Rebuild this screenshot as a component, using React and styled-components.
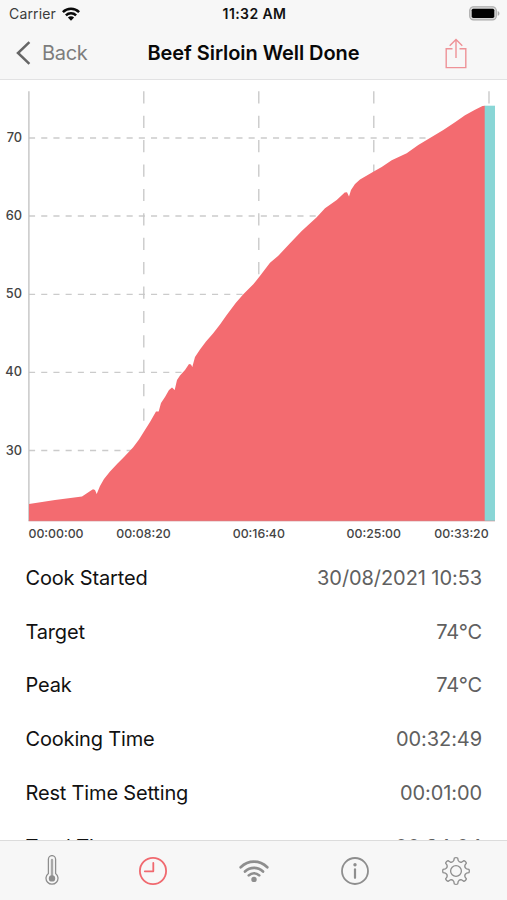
import React from "react";
import styled, { createGlobalStyle } from "styled-components";

const GlobalStyle = createGlobalStyle`
	* {
		box-sizing: border-box;
	}
	body {
		margin: 0;
		background-color: white;
		font-family: Inter, "Liberation Sans", sans-serif;
	}
`;

const Screen = styled.div`
	width: 507px;
	height: 900px;
	display: flex;
	flex-direction: column;
	overflow: hidden;
	background-color: white;
`;

const Header = styled.header`
	height: 80px;
	flex-shrink: 0;
	background-color: #f7f7f7;
	border-bottom: 1px solid #e2e2e3;
`;

const StatusBar = styled.div`
	height: 27px;
	display: grid;
	grid-template-columns: 1fr auto 1fr;
	align-items: center;
	padding: 0 7px 0 9px;
	color: #111;
`;

const Carrier = styled.div`
	display: flex;
	align-items: center;
	gap: 6px;
	font-size: 14px;
	letter-spacing: 0.15px;
	color: #3c3c3c;
`;

const Clock = styled.div`
	font-size: 14px;
	font-weight: 600;
	letter-spacing: 0.4px;
`;

const Battery = styled.div`
	display: flex;
	justify-content: flex-end;
`;

const NavBar = styled.nav`
	height: 52px;
	display: grid;
	grid-template-columns: 1fr auto 1fr;
	align-items: center;
	padding: 0 16px;
`;

const BackButton = styled.button`
	display: flex;
	align-items: center;
	gap: 11px;
	padding: 0;
	border: none;
	background: none;
	font-family: inherit;
	font-size: 20px;
	letter-spacing: -0.3px;
	color: #7d7d7d;
	cursor: pointer;
`;

const Title = styled.h1`
	margin: 0;
	font-size: 20px;
	font-weight: 600;
	letter-spacing: -0.06px;
	color: #080808;
	white-space: nowrap;
`;

const ShareButton = styled.button`
	display: flex;
	justify-self: end;
	margin-right: 24px;
	padding: 0;
	border: none;
	background: none;
	cursor: pointer;
`;

const Content = styled.main`
	flex: 1;
	min-height: 0;
	overflow: hidden;
`;

const ChartSvg = styled.svg`
	display: block;
	width: 507px;
	height: 471px;
`;

const AxisLabel = styled.text`
	font-size: ${(props) => (props.$small ? "12.3px" : "12.8px")};
	font-weight: 500;
	fill: #444;
`;

const Row = styled.div`
	height: 53.8px;
	display: flex;
	align-items: center;
	justify-content: space-between;
	padding: 0 25px 0 25.5px;
	font-size: 20px;
`;

const Label = styled.span`
	color: #111;
	letter-spacing: -0.17px;
`;

const Value = styled.span`
	color: #606060;
	letter-spacing: -0.08px;
`;

const TabBar = styled.footer`
	height: 60px;
	flex-shrink: 0;
	display: grid;
	grid-template-columns: repeat(5, 1fr);
	padding-left: 1px;
	background-color: #f7f7f7;
	border-top: 1px solid #dcdcdc;
`;

const Tab = styled.button`
	display: flex;
	align-items: center;
	justify-content: center;
	padding: 0;
	border: none;
	background: none;
	color: ${(props) => (props.$active ? "#f0696f" : "#8e8e8e")};
	cursor: pointer;
`;

// x, y along the top edge of the temperature area
const curve = [
	[29, 504], [55, 500], [82, 496.5], [91, 490.5], [93, 489.2], [95, 490], [96.7, 494],
	[100, 486], [104, 479], [110, 471.5], [118, 463], [124, 457], [133, 447.5],
	[139, 439.5], [144, 431.5], [150, 422], [154, 415], [156, 411.5], [158.7, 411.5],
	[161, 403], [165, 397], [169, 390], [172, 387.5], [174.7, 390], [177, 380],
	[180, 375.5], [185, 370], [189, 364], [191, 364.5], [192.3, 367], [195, 357],
	[200, 349.5], [206, 341.5], [213, 333.5], [220, 324.5], [226.7, 315], [235.7, 303],
	[243.3, 294.3], [253.3, 284.3], [260.7, 275], [270, 262.7], [278.3, 255.7],
	[290, 243.3], [301.7, 231], [316.7, 217.3], [325, 208.3], [336.7, 200],
	[344.7, 192.5], [347, 192.3], [349, 196.5], [351, 190], [355, 184], [360, 179.5],
	[373.3, 171.7], [381.7, 167], [391.7, 160.3], [406.7, 153.3], [418.3, 145],
	[428.3, 139], [443.3, 130], [455, 122.3], [465, 115.3], [475, 109.7],
	[482.5, 106], [485, 105.7],
];

const temps = [
	{ label: "70", y: 138 },
	{ label: "60", y: 216 },
	{ label: "50", y: 294.3 },
	{ label: "40", y: 372.3 },
	{ label: "30", y: 450.5 },
];

const times = [
	{ label: "00:00:00", x: 28.9, textX: 56 },
	{ label: "00:08:20", x: 143.8, textX: 143.5 },
	{ label: "00:16:40", x: 258.8, textX: 258.8 },
	{ label: "00:25:00", x: 373.8, textX: 373.8 },
	{ label: "00:33:20", x: 489, textX: 461.5 },
];

const details = [
	{ label: "Cook Started", value: "30/08/2021 10:53" },
	{ label: "Target", value: "74°C" },
	{ label: "Peak", value: "74°C" },
	{ label: "Cooking Time", value: "00:32:49" },
	{ label: "Rest Time Setting", value: "00:01:00" },
	{ label: "Total Time", value: "00:34:04" },
];

function Chart() {
	const area = `29,521 ${curve.map((p) => p.join(",")).join(" ")} 485,521`;
	return (
		<ChartSvg viewBox="0 80 507 471">
			{temps.map((t) => (
				<g key={t.label}>
					<path d={`M29 ${t.y}H495`} stroke="#cbcbcb" strokeWidth="1.3" strokeDasharray="6.1 6.1" />
					<AxisLabel x="22" y={t.y + 4} textAnchor="end">{t.label}</AxisLabel>
				</g>
			))}
			{times.map((t, i) => (
				<g key={t.label}>
					{i > 0 && (
						<path d={`M${t.x} 91.3V521`} stroke="#c6c6c6" strokeWidth="1.3" strokeDasharray="12.2 12.2" />
					)}
					<AxisLabel $small x={t.textX} y="538" textAnchor="middle">{t.label}</AxisLabel>
				</g>
			))}
			<path d="M28.9 91.3V521" stroke="#bfbfbf" strokeWidth="1.3" />
			<polygon points={area} fill="#f36b70" />
			<rect x="484.7" y="105.7" width="10.3" height="415.3" fill="#89d6d6" />
			<path d="M28.5 521H495" stroke="#c98a8f" strokeWidth="0.6" />
		</ChartSvg>
	);
}

function WifiStatusIcon() {
	return (
		<svg width="18" height="14" viewBox="0 0 18 14" fill="none" stroke="#0a0a0a" strokeWidth="2.5">
			<path d="M0.9 5.1a11.5 11.5 0 0 1 16.2 0" />
			<path d="M3.9 8.4a7.2 7.2 0 0 1 10.2 0" />
			<path d="M9 13.8L5.9 10.6a4.4 4.4 0 0 1 6.2 0z" fill="#0a0a0a" stroke="none" />
		</svg>
	);
}

function BatteryIcon() {
	return (
		<svg width="31" height="15" viewBox="0 0 31 15">
			<rect x="0.7" y="0.7" width="26.6" height="13.2" rx="3.8" fill="#d5d5d5" stroke="#aaa" strokeWidth="1.1" />
			<rect x="2.7" y="2.7" width="22.6" height="9.2" rx="1.6" fill="#000" />
			<path d="M28.7 4.9c2.3.8 2.3 4.1 0 4.9z" fill="#aaa" />
		</svg>
	);
}

function ThermometerIcon() {
	return (
		<svg width="14" height="31" viewBox="0 0 14 31" fill="none" stroke="currentColor" strokeWidth="1.3">
			<path d="M3.4 18.4V4.2a3.6 3.6 0 0 1 7.2 0V18.4a6 6 0 1 1-7.2 0z" />
			<path d="M7 5V22" strokeWidth="2.4" strokeLinecap="round" opacity="0.75" />
			<circle cx="7" cy="23.4" r="3.2" fill="currentColor" stroke="none" />
		</svg>
	);
}

function ClockIcon() {
	return (
		<svg width="30" height="30" viewBox="0 0 30 30" fill="none" stroke="currentColor" strokeWidth="1.8" strokeLinecap="round">
			<circle cx="15" cy="15" r="13.1" />
			<path d="M15.3 7v8.3H6.8" strokeLinejoin="round" />
		</svg>
	);
}

function WifiIcon() {
	return (
		<svg width="30" height="24" viewBox="0 0 30 24" fill="none" stroke="currentColor" strokeWidth="2.7" strokeLinecap="round">
			<path d="M1.7 8.2C9.5 0.8 20.5 0.8 28.3 8.2" />
			<path d="M6 12.5c5.2-4.9 12.8-4.9 18 0" />
			<path d="M9.8 16.4c3-2.9 7.4-2.9 10.4 0" />
			<circle cx="15" cy="20.4" r="2.7" fill="currentColor" stroke="none" />
		</svg>
	);
}

function InfoIcon() {
	return (
		<svg width="30" height="30" viewBox="0 0 30 30" fill="none" stroke="currentColor" strokeLinecap="round">
			<circle cx="15" cy="15" r="13" strokeWidth="1.8" />
			<circle cx="15" cy="8.8" r="1.7" fill="currentColor" stroke="none" />
			<path d="M15 13.4v8.4" strokeWidth="2.2" />
		</svg>
	);
}

// eight rounded teeth, each made from a pair of points on the outer radius
const gearPath = () => {
	const at = (deg, r) => {
		const a = ((deg - 90) * Math.PI) / 180;
		return `${(15 + r * Math.cos(a)).toFixed(2)} ${(15 + r * Math.sin(a)).toFixed(2)}`;
	};
	let d = "";
	for (let i = 0; i < 8; i++) {
		const c = i * 45;
		d += `${i ? "L" : "M"}${at(c - 12, 10.7)}L${at(c - 7.5, 13.1)}Q${at(c, 13.7)} ${at(c + 7.5, 13.1)}L${at(c + 12, 10.7)}Q${at(c + 22.5, 8.9)} ${at(c + 33, 10.7)}`;
	}
	return d + "Z";
};

function GearIcon() {
	return (
		<svg width="30" height="30" viewBox="0 0 30 30" fill="none" stroke="currentColor" strokeWidth="1.3" strokeLinejoin="round">
			<path d={gearPath()} />
			<circle cx="15" cy="15" r="5.4" />
		</svg>
	);
}

const tabs = [
	{ name: "probe", icon: <ThermometerIcon /> },
	{ name: "history", icon: <ClockIcon />, active: true },
	{ name: "connection", icon: <WifiIcon /> },
	{ name: "info", icon: <InfoIcon /> },
	{ name: "settings", icon: <GearIcon /> },
];

export default function App() {
	return (
		<Screen>
			<GlobalStyle />
			<Header>
				<StatusBar>
					<Carrier>
						Carrier
						<WifiStatusIcon />
					</Carrier>
					<Clock>11:32 AM</Clock>
					<Battery>
						<BatteryIcon />
					</Battery>
				</StatusBar>
				<NavBar>
					<BackButton>
						<svg width="15" height="24" viewBox="0 0 15 24" fill="none" stroke="#666" strokeWidth="2.5">
							<path d="M13.4 1.2L2 12l11.4 10.8" />
						</svg>
						Back
					</BackButton>
					<Title>Beef Sirloin Well Done</Title>
					<ShareButton>
						<svg width="22" height="31" viewBox="0 0 22 31" fill="none" stroke="#ee9297" strokeWidth="1.4">
							<path d="M7.5 10.7H1.2V29.6h19.6V10.7h-6.3" />
							<path d="M11 20V1.5M4.7 7.8L11 1.5l6.3 6.3" />
						</svg>
					</ShareButton>
				</NavBar>
			</Header>
			<Content>
				<Chart />
				{details.map((item) => (
					<Row key={item.label}>
						<Label>{item.label}</Label>
						<Value>{item.value}</Value>
					</Row>
				))}
			</Content>
			<TabBar>
				{tabs.map((tab) => (
					<Tab key={tab.name} $active={tab.active}>
						{tab.icon}
					</Tab>
				))}
			</TabBar>
		</Screen>
	);
}
